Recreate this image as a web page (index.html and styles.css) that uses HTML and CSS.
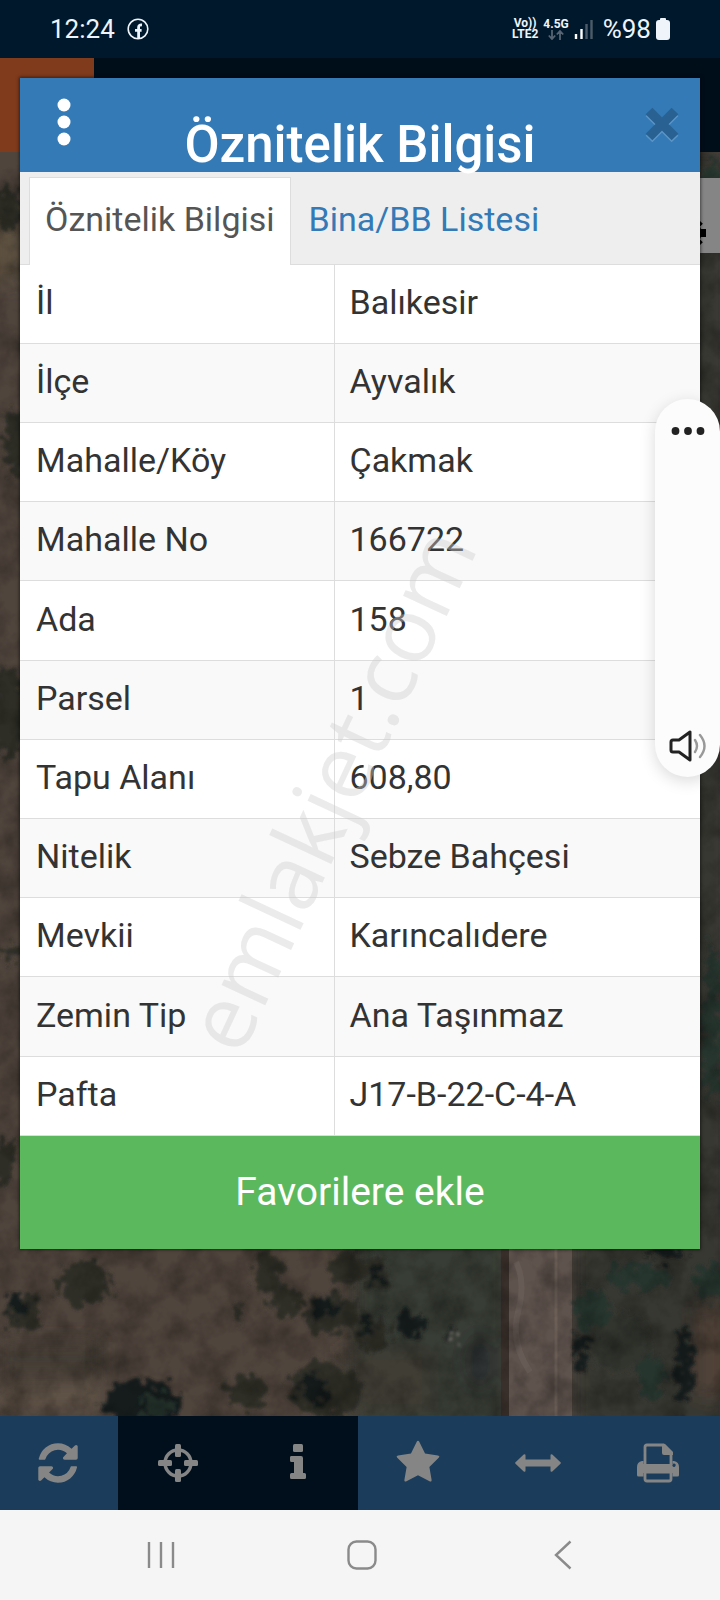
FILE: index.html
```html
<!DOCTYPE html>
<html lang="tr">
<head>
  <meta charset="UTF-8" />
  <meta name="viewport" content="width=device-width, initial-scale=1.0" />
  <title>Öznitelik Bilgisi</title>
  <link rel="stylesheet" href="styles.css">
</head>
<body>

  <header class="status-bar">
    <span class="clock">12:24</span>
    <svg class="fb-icon" width="22" height="22" viewBox="0 0 22 22">
      <circle cx="11" cy="11" r="9.8" fill="none" stroke="currentColor" stroke-width="1.6"/>
      <path d="M11.6 21V9.2q0-2.6 3.4-2.2M8 12.3h6.6" fill="none" stroke="currentColor" stroke-width="2.8"/>
    </svg>
    <div class="status-right">
      <div class="net"><span>Vo))</span><span>LTE2</span></div>
      <div class="net">
        <span>4.5G</span>
        <svg width="16" height="10" viewBox="0 0 16 10" fill="none" stroke="#566473" stroke-width="1.8">
          <path d="M4 0v9M0.8 5.5L4 9l3.2-3.500M12 10V1M8.800 4.500L12 1l3.200 3.500"/>
        </svg>
      </div>
      <svg class="signal" width="20" height="20" viewBox="0 0 20 20">
        <path d="M2 15v5M7.500 10v10" stroke="#fff" stroke-width="2.400"/>
        <path d="M12.500 5v15M17.500 1v19" stroke="#4c5a69" stroke-width="2.400"/>
      </svg>
      <span class="clock">%98</span>
      <svg width="14" height="22" viewBox="0 0 14 22" fill="currentColor">
        <rect x="4" y="0" width="6" height="4" rx="1"/>
        <rect x="0" y="2" width="14" height="20" rx="3"/>
      </svg>
    </div>
  </header>

  <div class="top-bar"><div class="logo-box"></div></div>

  <main class="map">
    <svg class="map-image" viewBox="0 0 720 1264" preserveAspectRatio="xMidYMax slice">
      <defs>
        <filter id="rough" x="-10%" y="-10%" width="120%" height="120%">
          <feTurbulence type="fractalNoise" baseFrequency="0.1" numOctaves="3" seed="4"/>
          <feDisplacementMap in="SourceGraphic" scale="30" xChannelSelector="R" yChannelSelector="G"/>
          <feGaussianBlur stdDeviation="1.4"/>
        </filter>
        <filter id="haze" x="-20%" y="-20%" width="140%" height="140%">
          <feGaussianBlur stdDeviation="9"/>
        </filter>
        <filter id="grain" x="0" y="0" width="100%" height="100%">
          <feTurbulence type="fractalNoise" baseFrequency="0.035" numOctaves="4" seed="9"/>
          <feColorMatrix values="0 0 0 0 0  0 0 0 0 0  0 0 0 0 0  1.5 0 0 0 -0.55"/>
        </filter>
      </defs>
      <rect width="720" height="1264" fill="#50453d"/>
      <!-- soil and grass -->
      <g filter="url(#haze)">
        <rect x="355" y="1060" width="155" height="220" fill="#383c34"/>
        <rect x="572" y="0" width="160" height="1280" fill="#383930"/>
        <rect x="696" y="1155" width="30" height="90" fill="#514239"/>
        <rect x="0" y="1190" width="100" height="34" fill="#443e34"/>
        <rect x="0" y="1234" width="100" height="20" fill="#64564a"/>
        <rect x="340" y="1200" width="90" height="60" fill="#413c34"/>
        <rect x="-10" y="70" width="30" height="60" fill="#5d5141"/>
        <ellipse cx="480" cy="1210" rx="18" ry="30" fill="#2d3331"/>
      </g>
      <!-- road -->
      <path d="M507 1060h65v204h-63z" fill="#5f534d"/>
      <path d="M505 1060v204" stroke="#3a302b" stroke-width="8"/>
      <path d="M516 1110q10 20 2 50t12 60" stroke="#6c605b" stroke-width="6" fill="none" opacity=".6"/>
      <path d="M556 1060v204" stroke="#6d6059" stroke-width="3"/>
      <!-- trees -->
      <g filter="url(#rough)">
        <g fill="#2d2e28">
          <ellipse cx="84" cy="1132" rx="26" ry="23"/>
          <ellipse cx="24" cy="1160" rx="17" ry="19"/>
          <ellipse cx="268" cy="1120" rx="15" ry="22"/>
          <ellipse cx="286" cy="1150" rx="16" ry="16"/>
          <ellipse cx="332" cy="1162" rx="27" ry="20"/>
          <ellipse cx="346" cy="1115" rx="18" ry="17"/>
          <ellipse cx="376" cy="1120" rx="13" ry="18"/>
          <ellipse cx="372" cy="1180" rx="18" ry="18"/>
          <ellipse cx="247" cy="1240" rx="19" ry="18"/>
          <ellipse cx="326" cy="1238" rx="36" ry="28"/>
          <ellipse cx="8" cy="56" rx="14" ry="22"/>
          <ellipse cx="16" cy="290" rx="12" ry="34"/>
          <ellipse cx="8" cy="560" rx="18" ry="46"/>
          <ellipse cx="14" cy="800" rx="14" ry="9"/>
          <ellipse cx="4" cy="1010" rx="12" ry="22"/>
          <ellipse cx="240" cy="1160" rx="5" ry="9"/>
          <ellipse cx="620" cy="1190" rx="30" ry="30" fill="#33362d"/>
        </g>
        <g fill="#171b1a">
          <ellipse cx="20" cy="1154" rx="9" ry="13"/>
          <ellipse cx="142" cy="1250" rx="40" ry="23"/>
          <ellipse cx="325" cy="1155" rx="15" ry="10"/>
          <ellipse cx="410" cy="1172" rx="14" ry="13"/>
          <ellipse cx="376" cy="1125" rx="9" ry="6"/>
          <ellipse cx="366" cy="1174" rx="10" ry="8"/>
          <ellipse cx="315" cy="1236" rx="15" ry="15"/>
          <ellipse cx="582" cy="1190" rx="9" ry="7"/>
          <ellipse cx="580" cy="1213" rx="6" ry="10"/>
          <ellipse cx="665" cy="1100" rx="19" ry="6"/>
          <ellipse cx="684" cy="1215" rx="8" ry="40"/>
          <ellipse cx="451" cy="1184" rx="5" ry="6"/>
        </g>
        <g fill="#26342d">
          <ellipse cx="155" cy="1254" rx="16" ry="12"/>
          <ellipse cx="592" cy="1158" rx="18" ry="22"/>
          <ellipse cx="640" cy="1125" rx="32" ry="14"/>
          <ellipse cx="710" cy="1130" rx="16" ry="18"/>
          <ellipse cx="652" cy="1225" rx="14" ry="22"/>
          <ellipse cx="712" cy="30" rx="10" ry="20"/>
          <ellipse cx="712" cy="870" rx="10" ry="80"/>
        </g>
        <circle cx="454" cy="1186" r="3" fill="#85817a"/>
      </g>
      <rect width="720" height="1264" filter="url(#grain)" opacity=".4"/>
    </svg>
    <button class="map-settings" aria-label="Ayarlar">
      <svg width="38" height="38" viewBox="-19 -19 38 38">
        <circle r="10" fill="none" stroke="#000" stroke-width="7"/>
        <path d="M0-18V18M-18 0H18M-12-12L12 12M12-12L-12 12" stroke="#000" stroke-width="8"/>
        <circle r="6" fill="#858585"/>
      </svg>
    </button>
  </main>

  <div class="toolbar">
    <button class="tool" aria-label="Yenile">
      <svg width="46" height="46" viewBox="0 0 1792 1792"><path d="M1639 1056q0 5-1 7-64 268-268 434.500t-478 166.500q-146 0-282.500-55t-243.500-157l-129 129q-19 19-45 19t-45-19-19-45v-448q0-26 19-45t45-19h448q26 0 45 19t19 45-19 45l-137 137q71 66 161 102t187 36q134 0 250-65t186-179q11-17 53-117 8-23 30-23h192q13 0 22.500 9.500t9.500 22.500zm25-800v448q0 26-19 45t-45 19h-448q-26 0-45-19t-19-45 19-45l138-138q-148-137-349-137-134 0-250 65t-186 179q-11 17-53 117-8 23-30 23h-199q-13 0-22.500-9.500t-9.500-22.500v-7q65-268 270-434.500t480-166.500q146 0 284 55.500t245 156.500l130-129q19-19 45-19t45 19 19 45z"/></svg>
    </button>
    <button class="tool active" aria-label="Konum">
      <svg width="40" height="40" viewBox="0 0 40 40">
        <circle cx="20" cy="20" r="13" fill="none" stroke="currentColor" stroke-width="3.400"/>
        <rect x="17" y="1" width="6" height="13" rx="1.500"/>
        <rect x="17" y="26" width="6" height="13" rx="1.500"/>
        <rect x="0" y="17" width="14" height="6" rx="1.500"/>
        <rect x="26" y="17" width="14" height="6" rx="1.500"/>
      </svg>
    </button>
    <button class="tool active" aria-label="Bilgi">
      <svg width="18" height="40" viewBox="0 0 18 40">
        <rect x="4" y="1" width="10" height="8" rx="1.500"/>
        <path d="M2 13h10q2 0 2 2v15h1.500q1.500 0 1.500 1.500v3q0 1.500-1.500 1.500H2.500Q1 36 1 34.500v-3Q1 30 2.500 30H5V19H2.500Q1 19 1 17.500v-3Q1 13 2 13z"/>
      </svg>
    </button>
    <button class="tool" aria-label="Favoriler">
      <svg width="46" height="46" viewBox="0 0 1792 1792"><path d="M1728 647q0 22-26 48l-363 354 86 500q1 7 1 20 0 21-10.500 35.500t-30.500 14.500q-19 0-40-12l-449-236-449 236q-22 12-40 12-21 0-31.500-14.500t-10.500-35.500q0-6 2-20l86-500-364-354q-25-27-25-48 0-37 56-46l502-73 225-455q19-41 49-41t49 41l225 455 502 73q56 9 56 46z"/></svg>
    </button>
    <button class="tool" aria-label="Ölçüm">
      <svg width="46" height="18" viewBox="0 0 46 18">
        <path d="M0.500 8.300L8.700 0.600q1.800-1 1.800 1V5.500h25V1.600q0-2 1.800-1L45.500 8.300q.7.700 0 1.400l-8.200 7.700q-1.800 1-1.800-1V12.500h-25v3.900q0 2-1.800 1L.5 9.700q-.7-.7 0-1.400z"/>
      </svg>
    </button>
    <button class="tool" aria-label="Yazdır">
      <svg width="44" height="40" viewBox="0 0 44 40">
        <path d="M9 22V4q0-2 2-2h16.500L35 9.500V22M9 29v7q0 2 2 2h22q2 0 2-2v-7z" fill="none" stroke="currentColor" stroke-width="2.800"/>
        <path d="M26 1h3l8 8v3H28q-2 0-2-2z"/>
        <path fill-rule="evenodd" d="M6 18h1.500v3h29v-3H38q5 1 5 6v8q0 1.500-1.500 1.500H36.500V30h-29v3.500H2.500Q1 33.500 1 32v-8q0-5 5-6zM38 20.500a1.700 1.700 0 1 0 .01 0z"/>
      </svg>
    </button>
  </div>

  <nav class="android-nav">
    <button class="nav-key" aria-label="Son uygulamalar">
      <svg width="28" height="30" viewBox="0 0 28 30"><path d="M2 2v26M14 2v26M26 2v26"/></svg>
    </button>
    <button class="nav-key" aria-label="Ana ekran">
      <svg width="30" height="30" viewBox="0 0 30 30"><rect x="1.500" y="1.500" width="27" height="27" rx="8"/></svg>
    </button>
    <button class="nav-key" aria-label="Geri">
      <svg width="18" height="30" viewBox="0 0 18 30"><path d="M16.500 1.500L2 15l14.500 13.500"/></svg>
    </button>
  </nav>

  <!-- parcel info dialog -->
  <div class="dialog" role="dialog" aria-labelledby="dialog-title">
    <div class="dialog-header">
      <button class="header-button" aria-label="Menü">
        <svg width="14" height="48" viewBox="0 0 14 48"><circle cx="7" cy="7" r="6.500"/><circle cx="7" cy="24" r="6.500"/><circle cx="7" cy="41" r="6.500"/></svg>
      </button>
      <h1 class="dialog-title" id="dialog-title">Öznitelik Bilgisi</h1>
      <button class="header-button close" aria-label="Kapat">
        <svg width="36" height="38" viewBox="0 0 36 38" fill="none" stroke-width="9.500">
          <path d="M5 7l26 26M31 7L5 33" stroke="#5b95c8"/>
          <path d="M5 5l26 26M31 5L5 31" stroke="#296292"/>
        </svg>
      </button>
    </div>

    <div class="tabs">
      <a class="tab selected" href="#oznitelik">Öznitelik Bilgisi</a>
      <a class="tab" href="#bina">Bina/BB Listesi</a>
    </div>

    <table class="info-table" id="oznitelik">
      <tr><th scope="row">İl</th><td>Balıkesir</td></tr>
      <tr><th scope="row">İlçe</th><td>Ayvalık</td></tr>
      <tr><th scope="row">Mahalle/Köy</th><td>Çakmak</td></tr>
      <tr><th scope="row">Mahalle No</th><td>166722</td></tr>
      <tr><th scope="row">Ada</th><td>158</td></tr>
      <tr><th scope="row">Parsel</th><td>1</td></tr>
      <tr><th scope="row">Tapu Alanı</th><td>608,80</td></tr>
      <tr><th scope="row">Nitelik</th><td>Sebze Bahçesi</td></tr>
      <tr><th scope="row">Mevkii</th><td>Karıncalıdere</td></tr>
      <tr><th scope="row">Zemin Tip</th><td>Ana Taşınmaz</td></tr>
      <tr><th scope="row">Pafta</th><td>J17-B-22-C-4-A</td></tr>
    </table>

    <button class="favorite-button">Favorilere ekle</button>
  </div>

  <div class="volume-panel">
    <svg width="34" height="10" viewBox="0 0 34 10" fill="#222"><circle cx="4.500" cy="5" r="3.900"/><circle cx="17" cy="5" r="3.900"/><circle cx="29.500" cy="5" r="3.900"/></svg>
    <svg width="38" height="32" viewBox="0 0 38 32" fill="none" stroke-width="3" stroke-linejoin="round" stroke-linecap="round">
      <path d="M4 10h6L21 2v28L10 22H4q-2 0-2-2v-8q0-2 2-2z" stroke="#222"/>
      <path d="M26 10q4 6 0 12M31 5q9 11 0 22" stroke="#999" stroke-width="2.400"/>
    </svg>
  </div>

  <div class="watermark">emlakjet.com</div>

</body>
</html>
```
FILE: styles.css
```css
* {
  box-sizing: border-box;
}
body {
  margin: 0;
  min-height: 100vh;
  display: flex;
  flex-direction: column;
  position: relative;
  overflow-x: hidden;
  background: #00182b;
  color: #333;
  font-family: Roboto, sans-serif;
}
button {
  border: none;
  padding: 0;
  background: none;
  font-family: inherit;
  cursor: pointer;
}
svg {
  display: block;
}

/* status bar */
.status-bar {
  display: flex;
  align-items: center;
  height: 58px;
  padding: 0 50px;
  background: #00182b;
  color: #eef4fa;
}
.clock {
  font-size: 26px;
  line-height: 30px;
}
.fb-icon {
  margin-left: 12px;
}
.status-right {
  display: flex;
  align-items: center;
  gap: 5px;
  margin-left: auto;
}
.net {
  display: flex;
  flex-direction: column;
  align-items: center;
  font-size: 12px;
  line-height: 11px;
  font-weight: 700;
}
.signal {
  margin-right: 4px;
}

.top-bar {
  height: 94px;
  background: #000e1a;
}
.logo-box {
  width: 94px;
  height: 94px;
  background: #803a1c;
}

/* map */
.map {
  flex: 1;
  position: relative;
  overflow: hidden;
  background: #51463e;
}
.map-image {
  position: absolute;
  inset: 0;
  width: 100%;
  height: 100%;
}
.map-settings {
  position: absolute;
  top: 26px;
  right: 0;
  width: 64px;
  height: 75px;
  padding: 34px 13px 0;
  background: #858585;
}

/* bottom toolbar */
.toolbar {
  display: flex;
  height: 94px;
  margin-left: -2px;
  padding-right: 2px;
  background: #1b3d5b;
}
.tool {
  flex: 1;
  display: flex;
  align-items: center;
  justify-content: center;
  color: #858585;
  fill: currentColor;
}
.tool.active {
  background: #000f1b;
}
.android-nav {
  display: flex;
  align-items: center;
  height: 90px;
  padding: 0 56px 0 60px;
  background: #f5f5f5;
}
.nav-key {
  flex: 1;
  display: flex;
  justify-content: center;
  fill: none;
  stroke: #8a8a8a;
  stroke-width: 2.4;
}

/* dialog */
.dialog {
  position: absolute;
  top: 78px;
  left: 20px;
  right: 20px;
  background: #fff;
  box-shadow: 0 0 3px 1px rgba(0, 0, 0, 0.5);
}
.dialog-header {
  display: flex;
  align-items: flex-start;
  justify-content: space-between;
  height: 94px;
  padding: 20px 20px 0;
  background: #337ab7;
  color: #fff;
}
.header-button {
  display: flex;
  justify-content: center;
  width: 48px;
  fill: #fff;
}
.header-button.close {
  justify-content: flex-end;
  padding-top: 8px;
}
.dialog-title {
  margin: 20px 0 0;
  font-size: 51px;
  line-height: 54px;
  font-weight: 500;
}
.tabs {
  display: flex;
  gap: 2px;
  padding: 5px 9px 0;
  background: #eee;
  border-bottom: 1px solid #ddd;
}
.tab {
  padding: 21px 15px 25px;
  border: 1px solid transparent;
  border-bottom: none;
  font-size: 34px;
  line-height: 40px;
  color: #337ab7;
  text-decoration: none;
}
.tab.selected {
  margin-bottom: -1px;
  border-color: #ddd;
  background: #fff;
  color: #555;
}
.info-table {
  width: 100%;
  height: 871px;
  border-collapse: collapse;
}
.info-table th,
.info-table td {
  padding: 0 15px 4px;
  border-bottom: 1px solid #ddd;
  font-size: 34px;
  line-height: 40px;
  font-weight: 400;
  text-align: left;
}
.info-table th {
  width: 314px;
  padding-left: 16px;
  border-right: 1px solid #ddd;
}
.info-table tr:nth-child(even) {
  background: #f9f9f9;
}
.favorite-button {
  display: block;
  width: 100%;
  padding: 33px 16px 34px;
  background: #5cb85c;
  color: #fff;
  font-size: 39px;
  line-height: 46px;
}

/* volume slider of the phone */
.volume-panel {
  position: absolute;
  top: 399px;
  right: 0;
  display: flex;
  flex-direction: column;
  align-items: center;
  justify-content: space-between;
  width: 65px;
  height: 378px;
  padding: 27px 0 15px;
  border-radius: 33px;
  background: #fcfcfc;
  box-shadow: 0 4px 16px rgba(0, 0, 0, 0.15);
}

.watermark {
  position: absolute;
  top: calc(50% - 12px);
  left: calc(50% - 32px);
  transform: translate(-50%, -50%) rotate(-65deg);
  font-family: "Open Sans", sans-serif;
  font-size: 90px;
  color: rgba(205, 205, 205, 0.4);
  pointer-events: none;
}
```
